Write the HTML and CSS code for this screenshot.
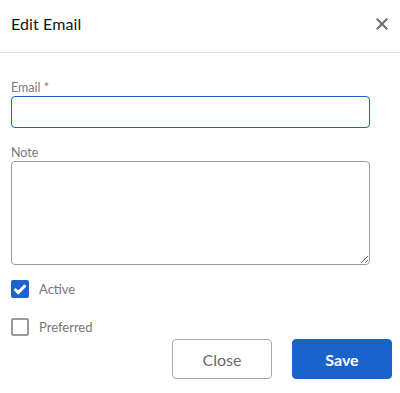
FILE: index.html
```html
<!DOCTYPE html>
<html>
<head>
<meta charset="utf-8">
<link rel="stylesheet" href="styles.css">
</head>
<body>
<div class="modal">
  <div class="header">
    <h1 class="title">Edit Email</h1>
    <button class="close-x" aria-label="Close">
      <svg width="12" height="12" viewBox="0 0 12 12"><path d="M1.5 1.5 L10.5 10.5 M10.5 1.5 L1.5 10.5" stroke="#6b6b6b" stroke-width="2" stroke-linecap="square"/></svg>
    </button>
  </div>
  <div class="form">
    <label class="field-label">Email *</label>
    <input class="input focused" type="text">
    <label class="field-label note-label">Note</label>
    <textarea class="textarea"></textarea>
    <div class="check-row first">
      <span class="box checked">
        <svg width="14" height="12" viewBox="0 0 14 12"><path d="M1.6 6 L5.3 9.6 L12.4 2.2" fill="none" stroke="#fff" stroke-width="3" stroke-linecap="butt" stroke-linejoin="miter"/></svg>
      </span>
      <span class="check-label">Active</span>
    </div>
    <div class="check-row">
      <span class="box"></span>
      <span class="check-label">Preferred</span>
    </div>
  </div>
  <div class="footer">
    <button class="btn secondary">Close</button>
    <button class="btn primary">Save</button>
  </div>
</div>
</body>
</html>
```
FILE: styles.css
```css
* { box-sizing: border-box; }
html, body { margin: 0; padding: 0; background: #fff; }
body { font-family: Lato, "Open Sans", sans-serif; }
.modal { width: 400px; height: 393px; display: flex; flex-direction: column; }
.header {
  height: 53px;
  display: flex;
  align-items: center;
  justify-content: space-between;
  padding: 0 12px 0 11px;
  border-bottom: 1px solid #e6e6e6;
}
.title { margin: 0 0 5px 0; font-size: 16px; font-weight: 400; color: #151515; letter-spacing: 0.1px; }
.close-x { border: 0; background: none; padding: 0; width: 12px; height: 12px; display: flex; margin-bottom: 5px; }
.form { padding: 28px 30px 0 11px; display: flex; flex-direction: column; }
.field-label { font-size: 12.5px; line-height: 14px; color: #7a7a7a; height: 15px; }
.note-label { margin-top: 18px; }
.input {
  width: 359px; height: 32px; margin: 0;
  border: 1px solid #1d63c9; border-radius: 4px;
  outline: none; font: inherit;
}
.textarea {
  width: 359px; height: 104px; margin: 0;
  border: 1px solid #9c9c9c; border-radius: 4px;
  font: inherit; resize: vertical; outline: none;
}
.check-row { display: flex; align-items: center; height: 18px; margin-top: 20px; }
.check-row.first { margin-top: 15px; }
.box {
  width: 18px; height: 18px; border: 2px solid #9a9a9a; border-radius: 2px;
  display: flex; align-items: center; justify-content: center; flex: none;
}
.box.checked { background: #1d63c9; border-color: #1d63c9; }
.check-label { margin-left: 10px; font-size: 13px; color: #777; }
.footer { display: flex; justify-content: flex-end; gap: 20px; padding: 3px 8px 0 0; }
.btn {
  width: 100px; height: 40px; border-radius: 4px; font-family: inherit; font-size: 16px;
  cursor: pointer;
}
.secondary { background: #fff; border: 1px solid #a8a8a8; color: #6a6a6a; }
.primary { background: #1a63cb; border: 1px solid #1a63cb; color: #fff; font-weight: 700; }
```
